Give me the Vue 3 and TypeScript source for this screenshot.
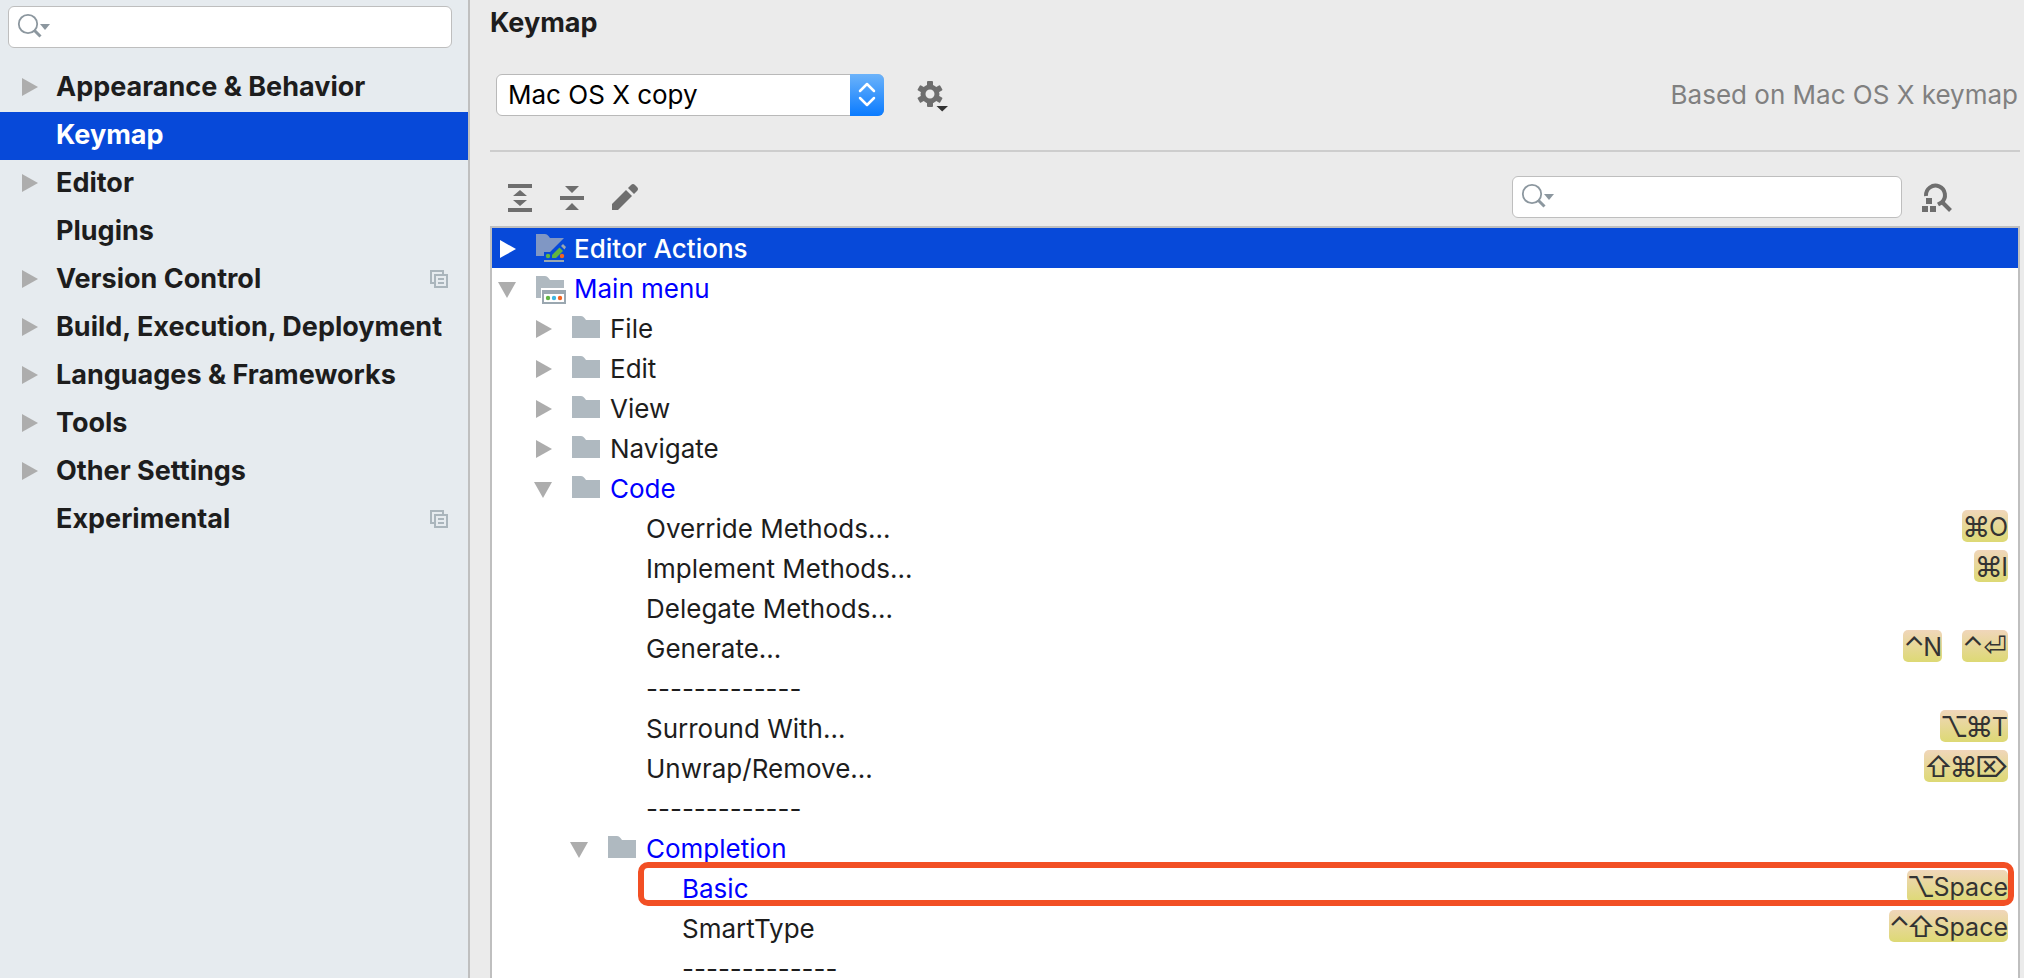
<script setup lang="ts">
import { ref } from 'vue'

interface Category {
  label: string
  expandable: boolean
  projectLevel?: boolean
}

type Arrow = 'open' | 'closed' | 'none'
type Icon = 'folder' | 'editor' | 'menu' | 'none'

interface Shortcut {
  keys: string[]
}

interface ActionRow {
  label: string
  level: number
  arrow: Arrow
  icon: Icon
  changed?: boolean
  marked?: boolean
  shortcuts?: Shortcut[]
}

const categories: Category[] = [
  { label: 'Appearance & Behavior', expandable: true },
  { label: 'Keymap', expandable: false },
  { label: 'Editor', expandable: true },
  { label: 'Plugins', expandable: false },
  { label: 'Version Control', expandable: true, projectLevel: true },
  { label: 'Build, Execution, Deployment', expandable: true },
  { label: 'Languages & Frameworks', expandable: true },
  { label: 'Tools', expandable: true },
  { label: 'Other Settings', expandable: true },
  { label: 'Experimental', expandable: false, projectLevel: true },
]

const leaf = (label: string, level: number, ...shortcuts: string[][]): ActionRow => ({
  label,
  level,
  arrow: 'none',
  icon: 'none',
  shortcuts: shortcuts.map((keys) => ({ keys })),
})

const folder = (label: string, level: number, open = false): ActionRow => ({
  label,
  level,
  arrow: open ? 'open' : 'closed',
  icon: 'folder',
  changed: open,
})

const divider = '-------------'

const rows: ActionRow[] = [
  { label: 'Editor Actions', level: 0, arrow: 'closed', icon: 'editor' },
  { label: 'Main menu', level: 0, arrow: 'open', icon: 'menu', changed: true },
  folder('File', 1),
  folder('Edit', 1),
  folder('View', 1),
  folder('Navigate', 1),
  folder('Code', 1, true),
  leaf('Override Methods...', 2, ['⌘', 'O']),
  leaf('Implement Methods...', 2, ['⌘', 'I']),
  leaf('Delegate Methods...', 2),
  leaf('Generate...', 2, ['⌃', 'N'], ['⌃', '⏎']),
  leaf(divider, 2),
  leaf('Surround With...', 2, ['⌥', '⌘', 'T']),
  leaf('Unwrap/Remove...', 2, ['⇧', '⌘', '⌦']),
  leaf(divider, 2),
  folder('Completion', 2, true),
  { ...leaf('Basic', 3, ['⌥', 'Space']), changed: true, marked: true },
  leaf('SmartType', 3, ['⌃', '⇧', 'Space']),
  leaf(divider, 3),
]

const symbolClass: Record<string, string> = {
  '⌘': 'sym',
  '⌥': 'sym',
  '⇧': 'sym',
  '⌃': 'sym sym-control',
  '⏎': 'sym sym-return',
  '⌦': 'sym sym-delete',
}

const activeCategory = ref('Keymap')
const activeRow = ref(0)
const scheme = ref('Mac OS X copy')
const settingsQuery = ref('')
const actionQuery = ref('')
</script>

<template>
  <div class="settings">
    <aside class="sidebar">
      <label class="search sidebar-search">
        <svg class="search-icon" viewBox="0 0 34 26" aria-hidden="true">
          <circle cx="10" cy="10" r="9.2" fill="none" stroke="#8c979f" stroke-width="1.8" />
          <path d="M16 16L22.5 22.5" stroke="#8c979f" stroke-width="3" />
          <path d="M22 10H32L27 16Z" fill="#8c979f" />
        </svg>
        <input v-model="settingsQuery" type="text" aria-label="Search settings" />
      </label>
      <nav class="categories">
        <button
          v-for="item in categories"
          :key="item.label"
          type="button"
          class="category"
          :class="{ active: item.label === activeCategory }"
          @click="activeCategory = item.label"
        >
          <span class="category-arrow">
            <svg v-if="item.expandable" viewBox="0 0 16 18" width="16" height="18" aria-hidden="true">
              <path d="M0 0L16 9L0 18Z" fill="#adadad" />
            </svg>
          </span>
          <span class="category-label">{{ item.label }}</span>
          <svg v-if="item.projectLevel" class="project-icon" viewBox="0 0 18 18" width="18" height="18" aria-hidden="true">
            <path d="M13 5V1H1V13H5" fill="none" stroke="#aab5bc" stroke-width="2" />
            <rect x="5" y="5" width="12" height="12" fill="none" stroke="#aab5bc" stroke-width="2" />
            <path d="M8 9H14M8 13H14" stroke="#aab5bc" stroke-width="2" />
          </svg>
        </button>
      </nav>
    </aside>

    <main class="content">
      <h1 class="title">Keymap</h1>

      <div class="scheme-bar">
        <div class="combo">
          <select v-model="scheme" aria-label="Keymap scheme">
            <option>Mac OS X copy</option>
          </select>
          <span class="combo-button">
            <svg viewBox="0 0 18 26" width="18" height="26" aria-hidden="true">
              <path
                d="M2 9L9 2L16 9M2 16L9 23L16 16"
                fill="none"
                stroke="#fff"
                stroke-width="2.5"
                stroke-linecap="round"
                stroke-linejoin="round"
              />
            </svg>
          </span>
        </div>
        <button type="button" class="icon-button" aria-label="Scheme actions">
          <svg viewBox="0 0 34 32" width="34" height="32" aria-hidden="true">
            <g transform="translate(15 15)" fill="#6e6e6e">
              <path
                fill-rule="evenodd"
                d="M-9.500 0A9.500 9.500 0 1 0 9.500 0A9.500 9.500 0 1 0 -9.500 0ZM-4.500 0A4.500 4.500 0 1 1 4.500 0A4.500 4.500 0 1 1 -4.500 0Z"
              />
              <rect v-for="a in [0, 60, 120, 180, 240, 300]" :key="a" x="-3" y="-13" width="6" height="6" rx="1" :transform="`rotate(${a})`" />
            </g>
            <path d="M21.500 27H33L27.200 32.500Z" fill="#333" />
          </svg>
        </button>
        <span class="based-on">Based on Mac OS X keymap</span>
      </div>

      <div class="toolbar">
        <button type="button" class="icon-button" aria-label="Expand all">
          <svg viewBox="0 0 28 28" width="28" height="28" fill="#6e6e6e" aria-hidden="true">
            <path d="M2 0H26V4H2ZM2 24H26V28H2ZM14 6L21 12H7ZM7 16H21L14 22Z" />
          </svg>
        </button>
        <button type="button" class="icon-button" aria-label="Collapse all">
          <svg viewBox="0 0 28 28" width="28" height="28" fill="#6e6e6e" aria-hidden="true">
            <path d="M2 12H26V16H2ZM7 2H21L14 9ZM14 19L21 26H7Z" />
          </svg>
        </button>
        <button type="button" class="icon-button" aria-label="Edit shortcut">
          <svg viewBox="0 0 28 28" width="28" height="28" fill="#6e6e6e" aria-hidden="true">
            <path d="M2 20L16 6L22 12L8 26H2Z" />
            <path d="M18 4L21 1Q23 -1 25 1L27 3Q29 5 27 7L24 10Z" />
          </svg>
        </button>
        <label class="search action-search">
          <svg class="search-icon" viewBox="0 0 34 26" aria-hidden="true">
            <circle cx="10" cy="10" r="9.2" fill="none" stroke="#8c979f" stroke-width="1.8" />
            <path d="M16 16L22.5 22.5" stroke="#8c979f" stroke-width="3" />
            <path d="M22 10H32L27 16Z" fill="#8c979f" />
          </svg>
          <input v-model="actionQuery" type="text" aria-label="Search actions by name" />
        </label>
        <button type="button" class="icon-button" aria-label="Find actions by shortcut">
          <svg viewBox="0 0 30 28" width="30" height="28" aria-hidden="true">
            <path d="M4 12A9.500 9.500 0 1 1 19.500 18.500L16 20.500" fill="none" stroke="#6e6e6e" stroke-width="4" />
            <path d="M19 17L28.500 26.500" stroke="#6e6e6e" stroke-width="4" />
            <path d="M4 14H10V20H4ZM0 22H6V28H0ZM8 22H14V28H8Z" fill="#6e6e6e" />
          </svg>
        </button>
      </div>

      <div class="tree" role="tree" aria-label="Actions">
        <div
          v-for="(row, index) in rows"
          :key="index"
          role="treeitem"
          class="row"
          :class="[`level-${row.level}`, { selected: index === activeRow, changed: row.changed }]"
          @click="activeRow = index"
        >
          <span class="row-arrow">
            <svg v-if="row.arrow !== 'none'" viewBox="0 0 18 18" width="18" height="18" fill="currentColor" aria-hidden="true">
              <path v-if="row.arrow === 'closed'" d="M2 0L18 9L2 18Z" />
              <path v-else d="M0 2H18L9 18Z" />
            </svg>
          </span>
          <span class="row-icon">
            <svg v-if="row.icon !== 'none'" viewBox="0 0 30 28" width="30" height="28" aria-hidden="true">
              <path v-if="row.icon === 'folder'" d="M0 2H9Q11 2 12.500 4L14 6H28V24H0Z" fill="#afb9c0" />
              <template v-else-if="row.icon === 'editor'">
                <path d="M0 0H9Q11 0 12.500 2L14 4H28L17 15L14 18H8V22H0Z" fill="#8097c4" />
                <path d="M16 21L23.500 13.500L27 17L20 24H16Z" fill="#62b543" />
                <path d="M25 12L27 10L30 13L28.500 15.500Z" fill="#9aa7b0" />
                <circle cx="12" cy="22" r="2.2" fill="#62b543" />
                <circle cx="26" cy="22" r="2.2" fill="#f26522" />
                <path d="M8 26H28V28H8Z" fill="#9aa7b0" />
              </template>
              <g v-else transform="translate(0 2)">
                <path d="M0 0H9Q11 0 12.500 2L14 4H28V12H5V22H0Z" fill="#afb9c0" />
                <rect x="7" y="15" width="22" height="12" fill="#fff" stroke="#9aa7b0" stroke-width="2" />
                <path d="M6 14H30V18H6Z" fill="#9aa7b0" />
                <circle cx="12" cy="22" r="2.2" fill="#62b543" />
                <circle cx="18" cy="22" r="2.2" fill="#40b6e0" />
                <circle cx="24" cy="22" r="2.2" fill="#f26522" />
              </g>
            </svg>
          </span>
          <span class="row-label">{{ row.label }}</span>
          <span v-if="row.shortcuts" class="shortcuts">
            <kbd v-for="(shortcut, s) in row.shortcuts" :key="s" class="shortcut"
              ><span v-for="key in shortcut.keys" :key="key" :class="symbolClass[key]">{{ key }}</span></kbd
            >
          </span>
          <span v-if="row.marked" class="marker" aria-hidden="true"></span>
        </div>
      </div>
    </main>
  </div>
</template>

<style>
body {
  background: #ebebeb;
}
</style>

<style scoped>
.settings {
  display: flex;
  height: 100vh;
  overflow: hidden;
  background: #ebebeb;
  color: #1d1d1d;
  font-family: Inter, "Liberation Sans", "DejaVu Sans", sans-serif;
  font-size: 26px;
  line-height: 40px;
}

.settings * {
  box-sizing: border-box;
}

button,
input,
select,
kbd {
  font: inherit;
  color: inherit;
}

button {
  border: 0;
  padding: 0;
  background: none;
}

svg {
  display: block;
  overflow: visible;
}

.sidebar {
  flex: 0 0 470px;
  min-width: 0;
  border-right: 2px solid #bfbfbf;
  background: #e6ebef;
}

.search {
  display: flex;
  align-items: center;
  height: 42px;
  border: 1px solid #bebebe;
  border-radius: 6px;
  background: #fff;
  padding-left: 9px;
}

.search-icon {
  flex: none;
  width: 34px;
  height: 26px;
}

.search input {
  flex: 1;
  min-width: 0;
  height: 36px;
  border: 0;
  outline: 0;
  background: transparent;
}

.sidebar-search {
  margin: 6px 16px 16px 8px;
}

.category {
  display: flex;
  align-items: center;
  width: 100%;
  height: 48px;
  padding: 0 20px 2px 22px;
  text-align: left;
  font-size: 27px;
  font-weight: 700;
  white-space: nowrap;
}

.category.active {
  background: #0749d9;
  color: #fff;
}

.category-arrow {
  flex: 0 0 34px;
}

.category-label {
  flex: 1;
}

.content {
  flex: 1;
  min-width: 0;
  display: flex;
  flex-direction: column;
  padding: 0 4px 0 20px;
}

.title {
  margin: 3px 0 31px;
  font-size: 27px;
  font-weight: 700;
  line-height: 40px;
}

.scheme-bar {
  display: flex;
  align-items: center;
  height: 78px;
  padding: 0 2px 34px 6px;
  border-bottom: 2px solid #cdcdcd;
}

.combo {
  display: flex;
  width: 388px;
  height: 42px;
  margin-right: 31px;
  position: relative;
}

.combo select {
  appearance: none;
  width: 100%;
  border: 1px solid #b9b9b9;
  border-radius: 6px;
  background: #fff;
  color: #000;
  padding: 0 40px 0 11px;
}

.combo-button {
  position: absolute;
  inset: 0 0 0 auto;
  width: 34px;
  display: flex;
  align-items: center;
  justify-content: center;
  border-radius: 0 6px 6px 0;
  background: linear-gradient(#6cb3fa, #0a7bff);
  pointer-events: none;
}

.based-on {
  margin-left: auto;
  color: #808080;
}

.toolbar {
  display: flex;
  align-items: center;
  gap: 24px;
  padding: 24px 68px 8px 16px;
}

.toolbar .icon-button {
  padding-top: 2px;
}

.action-search {
  width: 390px;
  margin-left: auto;
  margin-right: -4px;
}

.tree {
  flex: 1;
  min-height: 0;
  overflow: hidden;
  border: 2px solid #bfbfbf;
  border-bottom: 0;
  background: #fff;
}

.row {
  position: relative;
  display: flex;
  align-items: center;
  height: 40px;
  padding-right: 10px;
  white-space: nowrap;
}

.level-0 {
  padding-left: 6px;
}

.level-1 {
  padding-left: 42px;
}

.level-2 {
  padding-left: 78px;
}

.level-3 {
  padding-left: 114px;
}

.row-arrow {
  flex: 0 0 38px;
  padding-top: 2px;
  color: #adadad;
}

.row-icon {
  flex: 0 0 38px;
}

.row-label {
  padding-top: 2px;
}

.changed {
  color: #0000ff;
}

.selected {
  background: #0749d9;
  color: #fff;
  font-weight: 500;
}

.selected .row-arrow {
  color: #fff;
}

.shortcuts {
  display: flex;
  gap: 20px;
  margin-left: auto;
  padding-bottom: 4px;
}

.shortcut {
  display: flex;
  align-items: center;
  height: 32px;
  padding: 2px 0 0 2px;
  border-radius: 5px;
  background: linear-gradient(#f0d6ba, #ddd974);
  color: #333;
  font-size: 25px;
}

.sym {
  display: flex;
  justify-content: center;
  width: 25px;
  font-size: 28px;
}

.sym-control {
  width: 18px;
}

.sym-return {
  width: 26px;
  font-family: "DejaVu Sans", sans-serif;
}

.sym-delete {
  width: 32px;
}

.marker {
  position: absolute;
  inset: -6px 4px 2px 146px;
  border: 6px solid #f24f24;
  border-radius: 10px;
}
</style>
